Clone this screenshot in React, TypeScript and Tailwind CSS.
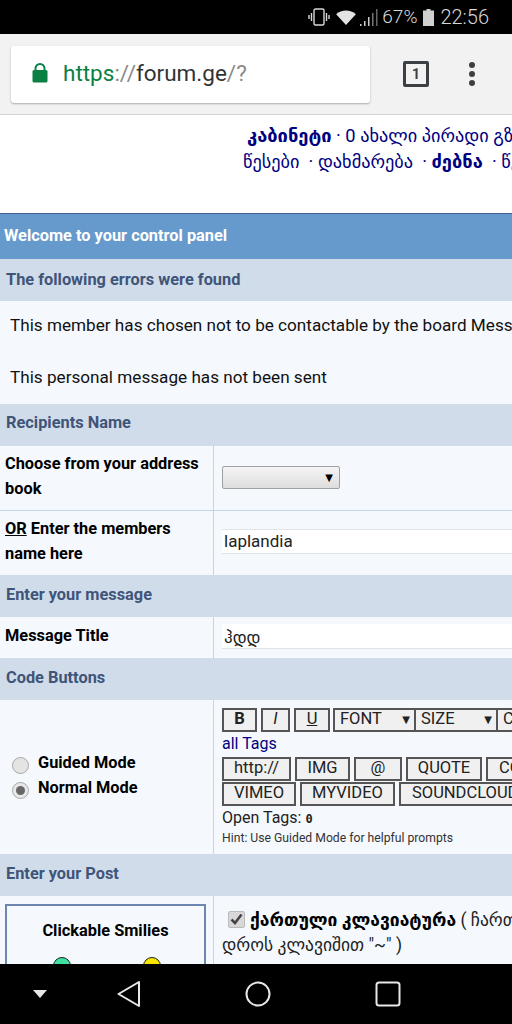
import React from "react";

const F = "font-['Roboto','DejaVu_Sans',sans-serif]";

function SectionHead({ children, pb = "pb-[2px]" }: { children: React.ReactNode; pb?: string }) {
  return (
    <div className={`${pb} h-[42px] shrink-0 bg-[#d1dceb] flex items-center pl-[6px] text-[16.350px] font-bold text-[#3f5578] whitespace-nowrap`}>
      {children}
    </div>
  );
}

function Btn({ w, children, cls = "" }: { w: string; children: React.ReactNode; cls?: string }) {
  return (
    <div className={`${w} ${cls} h-[24px] shrink-0 bg-[#f0f0f0] border-2 border-[#555] flex items-center justify-center pb-[2px] text-[16.500px] leading-none text-[#222] overflow-hidden whitespace-nowrap`}>
      {children}
    </div>
  );
}

export default function App() {
  return (
    <div className={`${F} w-[512px] h-[1024px] overflow-hidden flex flex-col bg-white text-black`}>
      {/* status bar */}
      <div className="h-[34px] shrink-0 bg-black flex items-center justify-end text-[#d8d8d8] text-[19px] font-light pr-[23px]">
        <svg width="22" height="18" viewBox="0 0 22 18" fill="none" stroke="#d8d8d8" strokeWidth="1.4" className="mr-[6px]">
          <rect x="6" y="1" width="10" height="16" rx="1.5" />
          <path d="M3.500 5v8M1 7v4M18.500 5v8M21 7v4" />
        </svg>
        <svg width="20" height="15" viewBox="0 0 21 16" className="mr-[4px]">
          <path d="M0 4.500C5.500-.7 15.500-.7 21 4.500L10.500 16z" fill="#e4e4e4" />
        </svg>
        <svg width="18" height="17" viewBox="0 0 18 17" className="mr-[4px]">
          <rect x="0" y="15" width="1.500" height="2" fill="#ccc" />
          <rect x="4" y="12" width="1.500" height="5" fill="#ccc" />
          <rect x="8" y="8" width="1.500" height="9" fill="#ccc" />
          <rect x="12" y="4" width="1.500" height="13" fill="#777" />
          <rect x="16" y="0" width="1.500" height="17" fill="#666" />
        </svg>
        <span className="mr-[6px]">67%</span>
        <svg width="11" height="17" viewBox="0 0 11 17" className="mr-[6px]">
          <path d="M3.500 0h4v1.500H11V17H0V1.500h3.500z" fill="#d0d0d0" />
        </svg>
        <span className="text-[20px]">22:56</span>
      </div>

      {/* toolbar */}
      <div className="h-[81px] shrink-0 bg-[#f2f2f2] border-b border-[#d4d4d4] flex items-center pl-[11px] pr-[37px]">
        <div className="w-[359px] h-[57px] bg-white rounded-[3px] shadow-[0_1px_2px_rgba(0,0,0,0.3)] flex items-center pl-[21px] text-[22.500px]">
          <svg width="16" height="20" viewBox="0 0 16 20" className="mr-[15px] mb-[2px]">
            <path d="M3.500 8V5.500a4.500 4.500 0 0 1 9 0V8" fill="none" stroke="#0b8043" strokeWidth="2" />
            <rect x="0.500" y="7" width="15" height="12.500" rx="1.500" fill="#0b8043" />
          </svg>
          <span className="text-[#0b8043]">https</span>
          <span className="text-[#8a8a8a]">://</span>
          <span className="text-[#333]">forum.ge</span>
          <span className="text-[#8a8a8a]">/?</span>
        </div>
        <div className="ml-[33px] w-[26px] h-[26px] border-[3px] border-[#3c4043] rounded-[2px] flex items-center justify-center text-[14px] font-bold text-[#3c4043] leading-none">
          1
        </div>
        <div className="ml-auto flex flex-col gap-[3px]">
          <span className="w-[6px] h-[6px] rounded-full bg-[#3c4043]" />
          <span className="w-[6px] h-[6px] rounded-full bg-[#3c4043]" />
          <span className="w-[6px] h-[6px] rounded-full bg-[#3c4043]" />
        </div>
      </div>

      {/* page */}
      <div className="flex-1 min-h-0 overflow-hidden flex flex-col bg-[#f5f9fe]">
        <div className="h-[98px] shrink-0 bg-white pl-[243px] pt-[8px] text-[18.300px] leading-[26px] text-[#000080] whitespace-nowrap overflow-hidden">
          <div className="pl-[4px]">
            <b>კაბინეტი</b> · 0 ახალი პირადი გზავნილი
          </div>
          <div>
            წესები &nbsp;· დახმარება &nbsp;· <b>ძებნა</b> &nbsp;· წევრები
          </div>
        </div>

        <div className="h-[46px] shrink-0 bg-[#6699cc] border-t border-[#3f5f8f] flex items-center pl-[4px] pb-[1px] text-[16.350px] font-bold text-white">
          Welcome to your control panel
        </div>
        <SectionHead pb="pb-0">The following errors were found</SectionHead>
        <div className="h-[103px] shrink-0 pl-[10px] pt-[11px] text-[17.150px] leading-[26px] text-[#111] whitespace-nowrap overflow-hidden">
          <div>This member has chosen not to be contactable by the board Messenger</div>
          <div className="mt-[26px]">This personal message has not been sent</div>
        </div>

        <SectionHead pb="pb-[4px]">Recipients Name</SectionHead>
        <div className="h-[65px] shrink-0 flex border-b border-[#c5d5e8]">
          <div className="w-[214px] shrink-0 border-r border-[#c5d5e8] pl-[5px] pt-[5px] text-[16.350px] leading-[25px] font-bold">
            Choose from your address
            <br />
            book
          </div>
          <div className="pl-[8px] pt-[20px]">
            <div className="w-[118px] h-[23px] rounded-[2px] border border-[#a0a0a0] bg-gradient-to-b from-[#f4f4f4] to-[#dedede] flex items-center justify-end pr-[6px] text-[10px] text-black">
              ▼
            </div>
          </div>
        </div>
        <div className="h-[64px] shrink-0 flex">
          <div className="w-[214px] shrink-0 border-r border-[#c5d5e8] pl-[5px] pt-[5px] text-[16.350px] leading-[25px] font-bold">
            <u>OR</u> Enter the members
            <br />
            name here
          </div>
          <div className="flex-1 pl-[8px] pt-[18px]">
            <div className="h-[25px] bg-white border-t border-b border-[#dfe3e8] pl-[2px] text-[17px] leading-[23px] text-[#222]">
              laplandia
            </div>
          </div>
        </div>

        <SectionHead>Enter your message</SectionHead>
        <div className="h-[41px] shrink-0 flex">
          <div className="w-[214px] shrink-0 border-r border-[#c5d5e8] pl-[5px] pt-[6px] text-[16.350px] leading-[25px] font-bold">
            Message Title
          </div>
          <div className="flex-1 pl-[8px] pt-[7px]">
            <div className="h-[25px] bg-white border-b border-[#dfe3e8] pl-[2px] text-[17px] leading-[27px] text-[#222] overflow-hidden">
              ჰდდ
            </div>
          </div>
        </div>

        <SectionHead>Code Buttons</SectionHead>
        <div className="h-[154px] shrink-0 flex">
          <div className="w-[214px] shrink-0 border-r border-[#c5d5e8] pl-[12px] flex flex-col justify-center pb-[5px] text-[16.350px] leading-[25px] font-bold">
            <div className="flex items-center gap-[9px]">
              <span className="w-[17px] h-[17px] mt-[6px] rounded-full border border-[#a8a8a8] bg-[#e4e4e4]" />
              Guided Mode
            </div>
            <div className="flex items-center gap-[9px]">
              <span className="w-[17px] h-[17px] mt-[6px] rounded-full border border-[#a8a8a8] bg-[#e8e8e8] flex items-center justify-center">
                <span className="w-[9px] h-[9px] rounded-full bg-[#666]" />
              </span>
              Normal Mode
            </div>
          </div>
          <div className="flex-1 min-w-0 pl-[8px] pt-[8px] overflow-hidden">
            <div className="flex gap-[4px] w-[400px]">
              <Btn w="w-[35px]" cls="font-bold">B</Btn>
              <Btn w="w-[29px]" cls="italic">I</Btn>
              <Btn w="w-[36px]" cls="underline">U</Btn>
              <div className="flex -ml-[1px]">
                <div className="w-[83px] h-[24px] bg-[#f0f0f0] border-2 border-[#555] flex items-center justify-between pl-[5px] pr-[4px] pb-[2px] text-[16.500px] text-[#222]">
                  FONT<span className="text-[10px]">▼</span>
                </div>
                <div className="w-[82px] h-[24px] bg-[#f0f0f0] border-2 border-[#555] border-l-0 flex items-center justify-between pl-[5px] pr-[4px] pb-[2px] text-[16.500px] text-[#222]">
                  SIZE<span className="text-[10px]">▼</span>
                </div>
                <div className="w-[40px] h-[24px] bg-[#f0f0f0] border-2 border-[#555] border-l-0 pl-[5px] text-[16.500px] leading-[18px] text-[#222] overflow-hidden">
                  COLOR
                </div>
              </div>
            </div>
            <div className="text-[16px] leading-[24px] text-[#000080]">all Tags</div>
            <div className="flex gap-[4px] mt-[1px] w-[400px]">
              <Btn w="w-[69px]">http://</Btn>
              <Btn w="w-[55px]">IMG</Btn>
              <Btn w="w-[48px]">@</Btn>
              <Btn w="w-[76px]">QUOTE</Btn>
              <Btn w="w-[60px]" cls="justify-start pl-[11px]">CODE</Btn>
            </div>
            <div className="flex gap-[4px] mt-[1px] w-[400px]">
              <Btn w="w-[74px]">VIMEO</Btn>
              <Btn w="w-[95px]">MYVIDEO</Btn>
              <Btn w="w-[130px]" cls="justify-start pl-[11px]">SOUNDCLOUD</Btn>
            </div>
            <div className="text-[16px] leading-[24px] text-[#222]">
              Open Tags: <span className="text-[12px] font-bold font-['DejaVu_Sans_Mono',monospace]">0</span>
            </div>
            <div className="text-[12.200px] leading-[18px] -mt-[2px] text-[#333] whitespace-nowrap">
              Hint: Use Guided Mode for helpful prompts
            </div>
          </div>
        </div>

        <SectionHead>Enter your Post</SectionHead>
        <div className="flex flex-1 min-h-0">
          <div className="w-[214px] shrink-0 border-r border-[#c5d5e8] pl-[5px] pt-[8px]">
            <div className="w-[201px] h-[120px] border-2 border-[#6d87b0] bg-[#f5f9fe] flex flex-col items-center pt-[13px] text-[16.350px] font-bold">
              Clickable Smilies
              <div className="flex gap-[72px] mt-[13px] ml-[2px]">
                <span className="w-[18px] h-[18px] rounded-full bg-[#40e0a0] border border-[#222]" />
                <span className="w-[18px] h-[18px] rounded-full bg-[#f5e500] border border-[#222]" />
              </div>
            </div>
          </div>
          <div className="flex-1 pl-[8px] pt-[12px] text-[17.500px] leading-[25px] text-[#222] overflow-hidden">
            <div className="whitespace-nowrap flex items-center">
              <span className="w-[17px] h-[17px] mr-[5px] mb-[3px] ml-[6px] rounded-[2px] bg-[#d8d8d8] border border-[#bbb] flex items-center justify-center shrink-0">
                <svg width="13" height="12" viewBox="0 0 13 12"><path d="M1.500 6.500L5 10 11.500 1.500" fill="none" stroke="#444" strokeWidth="2.500" /></svg>
              </span>
              <b className="text-black">ქართული კლავიატურა</b>&nbsp;( ჩართვა
            </div>
            <div className="whitespace-nowrap">დროს კლავიშით "~" )</div>
          </div>
        </div>
      </div>

      {/* nav */}
      <div className="h-[60px] shrink-0 bg-black flex items-center">
        <svg width="14" height="8" viewBox="0 0 14 8" className="ml-[33px] mr-[70px]">
          <path d="M0 0h14L7 8z" fill="#e8e8e8" />
        </svg>
        <svg width="24" height="26" viewBox="0 0 24 26" fill="none" stroke="#e8e8e8" strokeWidth="2" strokeLinejoin="round" className="mr-[104px]">
          <path d="M1.500 13L22 1v24z" />
        </svg>
        <svg width="26" height="26" viewBox="0 0 26 26" fill="none" stroke="#e8e8e8" strokeWidth="2" className="mr-[104px]">
          <circle cx="13" cy="13" r="11.500" />
        </svg>
        <svg width="26" height="26" viewBox="0 0 26 26" fill="none" stroke="#e8e8e8" strokeWidth="2">
          <rect x="1.500" y="1.500" width="23" height="23" rx="2.500" />
        </svg>
      </div>
    </div>
  );
}
